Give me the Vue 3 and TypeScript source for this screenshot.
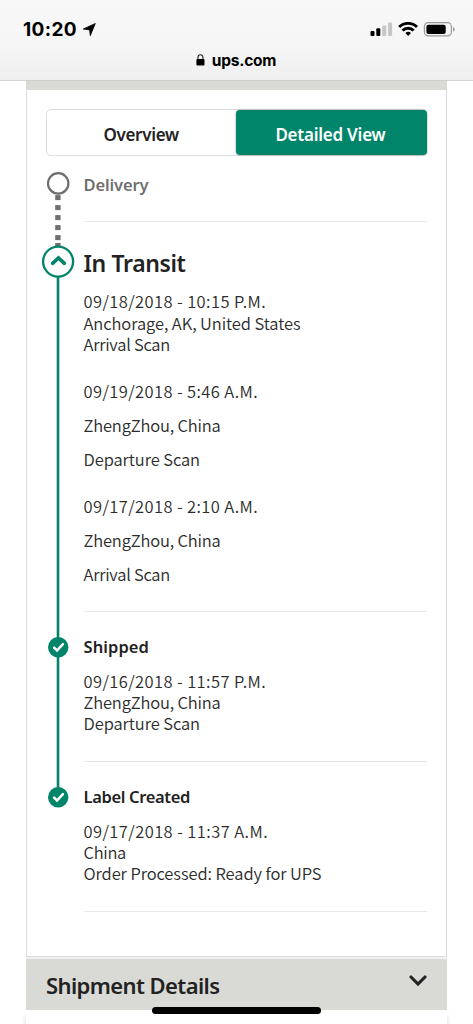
<script setup lang="ts">
interface Line {
  text: string
  width: number
}
interface Group {
  kind: 'tight' | 'loose'
  lines: Line[]
}
interface Step {
  title: string
  width: number
  state: 'pending' | 'current' | 'done'
  groups: Group[]
}

const steps: Step[] = [
  { title: 'Delivery', width: 65, state: 'pending', groups: [] },
  {
    title: 'In Transit',
    width: 102,
    state: 'current',
    groups: [
      {
        kind: 'tight',
        lines: [
          { text: '09/18/2018 - 10:15 P.M.', width: 182.5 },
          { text: 'Anchorage, AK, United States', width: 217 },
          { text: 'Arrival Scan', width: 86.5 },
        ],
      },
      {
        kind: 'loose',
        lines: [
          { text: '09/19/2018 - 5:46 A.M.', width: 174.5 },
          { text: 'ZhengZhou, China', width: 137 },
          { text: 'Departure Scan', width: 116.5 },
        ],
      },
      {
        kind: 'loose',
        lines: [
          { text: '09/17/2018 - 2:10 A.M.', width: 174.5 },
          { text: 'ZhengZhou, China', width: 137 },
          { text: 'Arrival Scan', width: 86.5 },
        ],
      },
    ],
  },
  {
    title: 'Shipped',
    width: 65.5,
    state: 'done',
    groups: [
      {
        kind: 'tight',
        lines: [
          { text: '09/16/2018 - 11:57 P.M.', width: 182.5 },
          { text: 'ZhengZhou, China', width: 137 },
          { text: 'Departure Scan', width: 116.5 },
        ],
      },
    ],
  },
  {
    title: 'Label Created',
    width: 106.5,
    state: 'done',
    groups: [
      {
        kind: 'tight',
        lines: [
          { text: '09/17/2018 - 11:37 A.M.', width: 184.5 },
          { text: 'China', width: 42.5 },
          { text: 'Order Processed: Ready for UPS', width: 238 },
        ],
      },
    ],
  },
]

const dots = [28, 38, 48, 58, 68]

// Tracks a label so that it spans the given width in pixels.
const vFit = {
  mounted(el: HTMLElement, binding: { value: number }) {
    const natural = el.getBoundingClientRect().width
    const count = (el.textContent ?? '').length
    el.style.letterSpacing = `${(binding.value - natural) / count}px`
  },
}
</script>

<template>
  <div class="screen">
    <header class="chrome">
      <div class="status">
        <div class="clock">
          <span v-fit="54">10:20</span>
          <svg width="13" height="13" viewBox="0 0 13 13"><path d="M12.3.5 7.3 12.6 6.6 6.9.3 6z" fill="#000" stroke="#000" stroke-width=".8" stroke-linejoin="round" /></svg>
        </div>
        <svg class="indicators" width="86" height="18" viewBox="0 0 86 18">
          <rect x="0.5" y="8.9" width="4" height="5" rx="1" />
          <rect x="6.3" y="6.2" width="4" height="7.7" rx="1" />
          <rect x="12.2" y="3.4" width="4" height="10.5" rx="1" fill="#c6c6c6" />
          <rect x="18.1" y="0.5" width="4" height="13.4" rx="1" fill="#c6c6c6" />
          <g fill="none" stroke="#000" stroke-width="2.9">
            <path d="M29.2 5.1a12.5 12.5 0 0 1 17.8 0" />
            <path d="M32.5 8.6a7.8 7.8 0 0 1 11.2 0" />
          </g>
          <path d="M35.4 11.1a4.2 4.2 0 0 1 5.6 0L38.2 13.9z" />
          <rect x="54.4" y="0.7" width="27" height="13.2" rx="3.8" fill="none" stroke="#999" stroke-width="1.2" />
          <rect x="56.4" y="2.7" width="19.3" height="9.3" rx="2" />
          <path d="M83 5.1c2.2.9 2.2 3.7 0 4.6z" fill="#999" />
        </svg>
      </div>
      <div class="address">
        <svg width="9" height="12" viewBox="0 0 9 12"><rect x=".4" y="5" width="8.1" height="6.4" rx="1" /><path d="M2 5.5V3.3a2.45 2.6 0 0 1 4.9 0V5.5" fill="none" stroke="#222" stroke-width="1.1" /></svg>
        <span v-fit="64.5">ups.com</span>
      </div>
    </header>

    <main class="card">
      <div class="band"></div>
      <nav class="tabs">
        <button class="tab"><span v-fit="75.5">Overview</span></button>
        <button class="tab active"><span v-fit="110">Detailed View</span></button>
      </nav>

      <section class="timeline">
        <svg class="rail" width="34" height="645" viewBox="0 0 34 645">
          <rect x="15.7" y="110" width="2.6" height="520" fill="#00856a" />
          <rect v-for="y in dots" :key="y" x="14.2" :y="y + 0.1" width="5.4" height="5" fill="#706f6f" />
          <rect x="14.2" y="76" width="5.4" height="4" fill="#706f6f" />
          <circle cx="17.2" cy="16.4" r="10.2" fill="#fff" stroke="#706f6f" stroke-width="2.2" />
          <circle cx="17.1" cy="94.6" r="15" fill="#fff" stroke="#00856a" stroke-width="2.3" />
          <path d="m11.6 96.4 5.9-5.4 5.9 5.4" fill="none" stroke="#00856a" stroke-width="3.6" stroke-linecap="round" />
          <g v-for="y in [480.3, 630.3]" :key="y">
            <circle cx="17.2" :cy="y" r="10.2" fill="#00856a" />
            <path :d="`M13.1 ${y + 0.4}l2.9 2.8 5.9-6.3`" fill="none" stroke="#fff" stroke-width="2.5" stroke-linecap="round" />
          </g>
        </svg>
        <div class="steps">
          <article v-for="step in steps" :key="step.title" class="step" :class="step.state">
            <h2><span v-fit="step.width">{{ step.title }}</span></h2>
            <div v-for="(group, g) in step.groups" :key="g" class="group" :class="group.kind">
              <p v-for="line in group.lines" :key="line.text"><span v-fit="line.width">{{ line.text }}</span></p>
            </div>
          </article>
        </div>
      </section>
    </main>

    <section class="details">
      <h2><span v-fit="173.5">Shipment Details</span></h2>
      <svg width="18" height="12" viewBox="0 0 18 12"><path d="m2 2 7 7 7-7" fill="none" stroke="#222" stroke-width="3.1" stroke-linecap="round" /></svg>
    </section>
    <div class="below"></div>
    <div class="home"></div>
  </div>
</template>

<style>
body {
  margin: 0;
  background: #fff;
}
</style>

<style scoped>
.screen {
  position: relative;
  width: 473px;
  height: 1024px;
  overflow: hidden;
  background: #fff;
  color: #2b2b2b;
  font-family: "Noto Sans CJK SC", "Noto Sans", sans-serif;
}
span {
  display: inline-block;
  white-space: nowrap;
}
.chrome {
  box-sizing: border-box;
  height: 81px;
  border-bottom: 1px solid #d5d5d5;
  background: linear-gradient(#f8f8f8, #f6f6f6 55%, #efefef);
  font-family: Inter, sans-serif;
  color: #000;
}
.status {
  display: flex;
  justify-content: space-between;
  padding: 17px 17px 0 23px;
  height: 24px;
}
.clock {
  display: flex;
  align-items: center;
  gap: 6px;
  height: 24px;
  font-size: 19px;
  font-weight: 700;
}
.indicators {
  margin-top: 5px;
}
.address {
  display: flex;
  justify-content: center;
  align-items: center;
  gap: 7px;
  height: 20px;
  margin: 9px 1px 0 0;
  font-size: 15.5px;
  font-weight: 700;
}
.card {
  box-sizing: border-box;
  width: 421px;
  height: 877px;
  margin: -1px 0 0 26px;
  border: solid #dcdcdc;
  border-width: 0 1px 1px;
}
.band {
  height: 10px;
  margin: 0 -1px;
  background: #d9dad5;
  border-top: 1px solid #cfcfcc;
  box-sizing: border-box;
}
.tabs {
  box-sizing: border-box;
  display: flex;
  height: 47px;
  margin: 19px 19px 0 18.5px;
  border: 1px solid #dcdcdc;
  border-radius: 5px;
}
.tab {
  flex: 1;
  padding: 3px 0 0;
  border: 0;
  background: none;
  color: #222;
  font: 600 17px "Noto Sans", sans-serif;
}
.tab.active {
  margin-right: -1px;
  padding-right: 2px;
  border-radius: 4px;
  background: #00856a;
  color: #fff;
  box-shadow: 0 0 2px rgba(0, 0, 0, 0.45);
}
.timeline {
  display: flex;
  gap: 8.5px;
  padding: 11px 19px 0 14px;
}
.rail {
  flex: none;
}
.steps {
  flex: 1;
}
.step {
  box-sizing: border-box;
  height: 150px;
  padding-top: 23px;
  border-bottom: 1.5px solid #e8e8e8;
}
.step.pending {
  height: 55px;
  padding-top: 6px;
}
.step.current {
  height: 390px;
  padding-top: 25px;
}
h2 {
  margin: 0;
  height: 24px;
  font: 600 16.5px/24px "Noto Sans", sans-serif;
  color: #222;
}
.pending h2 {
  color: #706f6f;
}
.current h2 {
  height: 32px;
  font-size: 23px;
  line-height: 32px;
}
.group {
  margin-top: 12px;
}
.done .group {
  margin-top: 11.5px;
}
.done p {
  height: 21.4px;
  line-height: 21.4px;
}
.group.tight + .group.loose {
  margin-top: 18px;
}
.group.loose + .group.loose {
  margin-top: 13px;
}
p {
  margin: 0;
  height: 21.5px;
  font-size: 16.5px;
  font-weight: 350;
  line-height: 21.5px;
}
.loose p {
  height: 34px;
  line-height: 34px;
}
.details {
  box-sizing: border-box;
  display: flex;
  justify-content: space-between;
  width: 421px;
  height: 53px;
  margin-left: 26px;
  padding: 11px 19px 0 20px;
  border-top: 2px solid #f1f1f1;
  background: #d9dad5;
}
.details h2 {
  height: 30px;
  font-size: 22px;
  line-height: 30px;
}
.details svg {
  margin: 5px 1px 0 0;
}
.below {
  width: 421px;
  height: 20px;
  margin-left: 26px;
  box-shadow: 0 6px 5px rgba(0, 0, 0, 0.16);
}
.home {
  position: absolute;
  left: 152px;
  top: 1007px;
  width: 169px;
  height: 7px;
  border-radius: 4px;
  background: #000;
}
</style>
